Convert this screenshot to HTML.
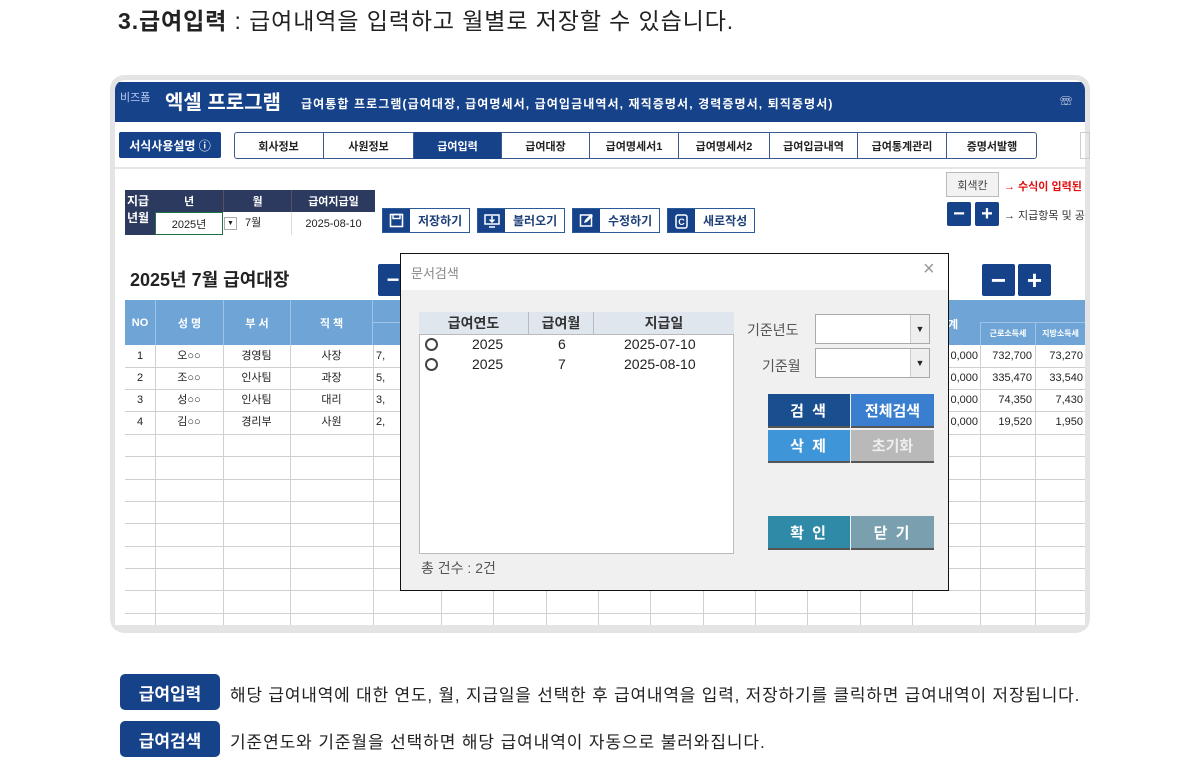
<!DOCTYPE html>
<html><head><meta charset="utf-8"><style>
*{margin:0;padding:0;box-sizing:border-box}
body{width:1200px;height:780px;background:#fff;font-family:"Liberation Sans","Noto Sans CJK KR",sans-serif;position:relative;overflow:hidden;color:#222}
.a{position:absolute}
.c{display:flex;align-items:center;justify-content:center}
.tab{position:absolute;top:132px;height:27px;font-size:11px;font-weight:bold;border-right:1px solid #3a5a8f;display:flex;align-items:center;justify-content:center;color:#222}
.btn{position:absolute;top:208px;height:25px;border:1px solid #2a5a9a;background:#fff;display:flex;align-items:center;font-size:12px;font-weight:bold;color:#1d3f78}
.btn .ic{width:27px;height:100%;background:#16428a;display:flex;align-items:center;justify-content:center;margin-right:8px}
.pm{position:absolute;background:#16428a;color:#fff;font-weight:bold;display:flex;align-items:center;justify-content:center;border-radius:2px}
.hl{position:absolute;height:1px;background:#d0d0d0}
.vl{position:absolute;width:1px;background:#d0d0d0}
.cell{position:absolute;font-size:11px;text-align:center;height:22px;line-height:22px}
.dbtn{position:absolute;color:#fff;font-weight:bold;font-size:15px;display:flex;align-items:center;justify-content:center;border-bottom:2px solid #555;letter-spacing:2px}
</style></head><body>

<div class="a" style="left:118px;top:2px;font-size:23px;white-space:nowrap;letter-spacing:0.9px"><b>3.급여입력</b> : 급여내역을 입력하고 월별로 저장할 수 있습니다.</div>

<!-- frame -->
<div class="a" style="left:110px;top:75px;width:980px;height:558px;background:#e4e4e4;border-radius:14px"></div>
<div class="a" style="left:115px;top:80px;width:970px;height:545px;background:#fff;border-radius:10px 10px 0 0;overflow:hidden">
  <div class="a" style="left:0;top:2px;width:970px;height:40px;background:#16428a"></div>
</div>
<div class="a" style="left:120px;top:89px;font-size:11px;color:#b9cdf0">비즈폼</div>
<div class="a" style="left:165px;top:86px;font-size:20px;font-weight:bold;color:#fff">엑셀 프로그램</div>
<div class="a" style="left:301px;top:95px;font-size:12px;font-weight:bold;color:#fff;white-space:nowrap;letter-spacing:1.1px">급여통합 프로그램(급여대장, 급여명세서, 급여입금내역서, 재직증명서, 경력증명서, 퇴직증명서)</div>
<div class="a" style="left:1060px;top:92px;font-size:12px;font-weight:bold;color:#fff">☏</div>

<!-- nav -->
<div class="a c" style="left:119px;top:132px;width:102px;height:26px;background:#16428a;color:#fff;font-size:12px;font-weight:bold;border-radius:2px">서식사용설명 ⓘ</div>
<div class="a" style="left:234px;top:132px;width:803px;height:27px;border:1px solid #3a5a8f;border-radius:3px"></div>
<div class="tab" style="left:234px;width:90px">회사정보</div>
<div class="tab" style="left:324px;width:90px">사원정보</div>
<div class="tab" style="left:414px;width:88px;background:#16428a;color:#fff">급여입력</div>
<div class="tab" style="left:502px;width:88px">급여대장</div>
<div class="tab" style="left:590px;width:89px">급여명세서1</div>
<div class="tab" style="left:679px;width:91px">급여명세서2</div>
<div class="tab" style="left:770px;width:88px">급여입금내역</div>
<div class="tab" style="left:858px;width:89px">급여통계관리</div>
<div class="tab" style="left:947px;width:90px;border-right:none">증명서발행</div>
<div class="a" style="left:1080px;top:132px;width:10px;height:27px;border:1px solid #ccc"></div>
<div class="a" style="left:115px;top:167px;width:970px;height:2px;background:#e6e6e6"></div>

<!-- small table -->
<div class="a" style="left:125px;top:190px;width:250px;height:45px;background:#2b3a5e"></div>
<div class="a" style="left:127px;top:193px;font-size:12px;font-weight:bold;color:#fff;line-height:17px">지급<br>년월</div>
<div class="a c" style="left:155px;top:190px;width:68px;height:22px;color:#fff;font-size:11px;font-weight:bold">년</div>
<div class="a c" style="left:223px;top:190px;width:68px;height:22px;color:#fff;font-size:11px;font-weight:bold;border-left:1px solid #555">월</div>
<div class="a c" style="left:291px;top:190px;width:84px;height:22px;color:#fff;font-size:11px;font-weight:bold;border-left:1px solid #555">급여지급일</div>
<div class="a c" style="left:155px;top:212px;width:68px;height:23px;background:#fff;border:1px solid #217346;font-size:11px">2025년</div>
<div class="a" style="left:223px;top:212px;width:68px;height:23px;background:#fff;font-size:11px;line-height:22px"><span style="display:inline-block;width:13px;height:13px;border:1px solid #aaa;font-size:7px;line-height:12px;text-align:center;vertical-align:middle;margin:0 8px 0 1px">▼</span>7월</div>
<div class="a c" style="left:291px;top:212px;width:84px;height:23px;background:#fff;border-left:1px solid #ddd;font-size:11px">2025-08-10</div>

<div class="btn" style="left:382px;width:88px"><span class="ic"><svg width="15" height="15" viewBox="0 0 15 15"><rect x="1.5" y="1.5" width="12" height="12" fill="none" stroke="#fff" stroke-width="1.6"/><rect x="4" y="1.5" width="7" height="4" fill="none" stroke="#fff" stroke-width="1.4"/></svg></span>저장하기</div>
<div class="btn" style="left:477px;width:88px"><span class="ic"><svg width="16" height="15" viewBox="0 0 16 15"><rect x="1" y="2" width="14" height="9" fill="none" stroke="#fff" stroke-width="1.5"/><path d="M8 3v6M5.5 6.5L8 9l2.5-2.5M5 14h6" stroke="#fff" stroke-width="1.5" fill="none"/></svg></span>불러오기</div>
<div class="btn" style="left:572px;width:88px"><span class="ic"><svg width="15" height="15" viewBox="0 0 15 15"><rect x="1.5" y="2" width="11" height="11" fill="none" stroke="#fff" stroke-width="1.5"/><path d="M5 10l1-3 6-6 2 2-6 6z" fill="#fff"/></svg></span>수정하기</div>
<div class="btn" style="left:667px;width:88px"><span class="ic"><svg width="15" height="17" viewBox="0 0 15 17"><rect x="2" y="3" width="11" height="13" rx="2" fill="none" stroke="#fff" stroke-width="1.5"/><text x="7.5" y="13" font-size="9" fill="#fff" text-anchor="middle" font-family="Liberation Sans">C</text></svg></span>새로작성</div>

<div class="a c" style="left:946px;top:172px;width:53px;height:25px;background:#f2f2f2;border:1px solid #bbb;font-size:11px;color:#444">회색칸</div>
<div class="a" style="left:1004px;top:178px;font-size:11px;font-weight:bold;color:#e01010;white-space:nowrap">→ 수식이 입력된</div>
<div class="pm" style="left:947px;top:202px;width:24px;height:24px;font-size:20px">−</div>
<div class="pm" style="left:975px;top:202px;width:24px;height:24px;font-size:20px">+</div>
<div class="a" style="left:1004px;top:207px;font-size:11px;white-space:nowrap;color:#333">→ 지급항목 및 공</div>

<div class="a" style="left:130px;top:266px;font-size:18px;font-weight:bold">2025년 7월 급여대장</div>
<div class="pm" style="left:378px;top:264px;width:30px;height:32px;font-size:22px">−</div>
<div class="pm" style="left:982px;top:264px;width:33px;height:32px;font-size:26px">−</div>
<div class="pm" style="left:1018px;top:264px;width:33px;height:32px;font-size:26px">+</div>

<!-- main table -->
<div class="a" style="left:125px;top:300px;width:960px;height:45px;background:#6fa5d6"></div>
<div class="a" style="left:373px;top:322px;width:539px;height:1px;background:#9fc3e6"></div>
<div class="a" style="left:980px;top:322px;width:105px;height:1px;background:#9fc3e6"></div>
<div class="a c" style="left:125px;top:300px;width:30px;height:45px;color:#fff;font-size:11px;font-weight:bold">NO</div>
<div class="a c" style="left:155px;top:300px;width:68px;height:45px;color:#fff;font-size:11px;font-weight:bold;border-left:1px solid #9fc3e6">성 명</div>
<div class="a c" style="left:223px;top:300px;width:67px;height:45px;color:#fff;font-size:11px;font-weight:bold;border-left:1px solid #9fc3e6">부 서</div>
<div class="a c" style="left:290px;top:300px;width:83px;height:45px;color:#fff;font-size:11px;font-weight:bold;border-left:1px solid #9fc3e6;border-right:1px solid #9fc3e6">직 책</div>
<div class="a" style="left:948px;top:316px;color:#fff;font-size:11px;font-weight:bold">계</div>
<div class="a c" style="left:980px;top:322px;width:55px;height:23px;color:#fff;font-size:8px;font-weight:bold;border-left:1px solid #9fc3e6">근로소득세</div>
<div class="a c" style="left:1035px;top:322px;width:50px;height:23px;color:#fff;font-size:8px;font-weight:bold;border-left:1px solid #9fc3e6">지방소득세</div>

<div class="hl" style="left:125px;top:367px;width:960px"></div>
<div class="hl" style="left:125px;top:389px;width:960px"></div>
<div class="hl" style="left:125px;top:411px;width:960px"></div>
<div class="hl" style="left:125px;top:434px;width:960px"></div>
<div class="hl" style="left:125px;top:456px;width:960px"></div>
<div class="hl" style="left:125px;top:479px;width:960px"></div>
<div class="hl" style="left:125px;top:501px;width:960px"></div>
<div class="hl" style="left:125px;top:523px;width:960px"></div>
<div class="hl" style="left:125px;top:546px;width:960px"></div>
<div class="hl" style="left:125px;top:568px;width:960px"></div>
<div class="hl" style="left:125px;top:590px;width:960px"></div>
<div class="hl" style="left:125px;top:613px;width:960px"></div>
<div class="vl" style="left:155px;top:345px;height:280px"></div>
<div class="vl" style="left:223px;top:345px;height:280px"></div>
<div class="vl" style="left:290px;top:345px;height:280px"></div>
<div class="vl" style="left:373px;top:345px;height:280px"></div>
<div class="vl" style="left:441px;top:345px;height:280px"></div>
<div class="vl" style="left:493px;top:345px;height:280px"></div>
<div class="vl" style="left:546px;top:345px;height:280px"></div>
<div class="vl" style="left:598px;top:345px;height:280px"></div>
<div class="vl" style="left:650px;top:345px;height:280px"></div>
<div class="vl" style="left:703px;top:345px;height:280px"></div>
<div class="vl" style="left:755px;top:345px;height:280px"></div>
<div class="vl" style="left:807px;top:345px;height:280px"></div>
<div class="vl" style="left:860px;top:345px;height:280px"></div>
<div class="vl" style="left:912px;top:345px;height:280px"></div>
<div class="vl" style="left:980px;top:345px;height:280px"></div>
<div class="vl" style="left:1035px;top:345px;height:280px"></div>

<div class="cell" style="left:125px;top:345px;width:30px">1</div><div class="cell" style="left:155px;top:345px;width:68px">오○○</div><div class="cell" style="left:223px;top:345px;width:67px">경영팀</div><div class="cell" style="left:290px;top:345px;width:83px">사장</div><div class="cell" style="left:376px;top:345px">7,</div>
<div class="cell" style="left:125px;top:367px;width:30px">2</div><div class="cell" style="left:155px;top:367px;width:68px">조○○</div><div class="cell" style="left:223px;top:367px;width:67px">인사팀</div><div class="cell" style="left:290px;top:367px;width:83px">과장</div><div class="cell" style="left:376px;top:367px">5,</div>
<div class="cell" style="left:125px;top:389px;width:30px">3</div><div class="cell" style="left:155px;top:389px;width:68px">성○○</div><div class="cell" style="left:223px;top:389px;width:67px">인사팀</div><div class="cell" style="left:290px;top:389px;width:83px">대리</div><div class="cell" style="left:376px;top:389px">3,</div>
<div class="cell" style="left:125px;top:411px;width:30px">4</div><div class="cell" style="left:155px;top:411px;width:68px">김○○</div><div class="cell" style="left:223px;top:411px;width:67px">경리부</div><div class="cell" style="left:290px;top:411px;width:83px">사원</div><div class="cell" style="left:376px;top:411px">2,</div>

<div class="cell" style="left:940px;top:345px;width:38px;text-align:right">0,000</div><div class="cell" style="left:980px;top:345px;width:52px;text-align:right">732,700</div><div class="cell" style="left:1035px;top:345px;width:48px;text-align:right">73,270</div>
<div class="cell" style="left:940px;top:367px;width:38px;text-align:right">0,000</div><div class="cell" style="left:980px;top:367px;width:52px;text-align:right">335,470</div><div class="cell" style="left:1035px;top:367px;width:48px;text-align:right">33,540</div>
<div class="cell" style="left:940px;top:389px;width:38px;text-align:right">0,000</div><div class="cell" style="left:980px;top:389px;width:52px;text-align:right">74,350</div><div class="cell" style="left:1035px;top:389px;width:48px;text-align:right">7,430</div>
<div class="cell" style="left:940px;top:411px;width:38px;text-align:right">0,000</div><div class="cell" style="left:980px;top:411px;width:52px;text-align:right">19,520</div><div class="cell" style="left:1035px;top:411px;width:48px;text-align:right">1,950</div>

<!-- dialog -->
<div class="a" style="left:400px;top:253px;width:549px;height:338px;background:#f0f0f0;border:1px solid #111">
  <div class="a" style="left:0;top:0;width:547px;height:36px;background:#fff"></div>
  <div class="a" style="left:10px;top:9px;font-size:13px;color:#888">문서검색</div>
  <div class="a" style="left:522px;top:4px;font-size:20px;color:#999;font-weight:300">×</div>
  <div class="a" style="left:18px;top:58px;width:315px;height:242px;background:#fff;border:1px solid #bbb"></div>
  <div class="a" style="left:18px;top:58px;width:315px;height:23px;background:#dfe6ee;border-bottom:1px solid #bbb"></div>
  <div class="a c" style="left:18px;top:58px;width:110px;height:22px;font-size:14px;font-weight:bold;color:#333;border-right:1px solid #bbb">급여연도</div>
  <div class="a c" style="left:128px;top:58px;width:65px;height:22px;font-size:14px;font-weight:bold;color:#333;border-right:1px solid #bbb">급여월</div>
  <div class="a c" style="left:193px;top:58px;width:140px;height:22px;font-size:14px;font-weight:bold;color:#333">지급일</div>
  <div class="a" style="left:24px;top:84px;width:13px;height:13px;border:2px solid #444;border-radius:50%"></div>
  <div class="a" style="left:24px;top:104px;width:13px;height:13px;border:2px solid #444;border-radius:50%"></div>
  <div class="a" style="left:71px;top:80px;font-size:14px;line-height:20px">2025<br>2025</div>
  <div class="a" style="left:157px;top:80px;font-size:14px;line-height:20px">6<br>7</div>
  <div class="a" style="left:223px;top:80px;font-size:14px;line-height:20px">2025-07-10<br>2025-08-10</div>
  <div class="a" style="left:346px;top:66px;font-size:14px;color:#555">기준년도</div>
  <div class="a" style="left:361px;top:102px;font-size:14px;color:#555">기준월</div>
  <div class="a" style="left:414px;top:60px;width:115px;height:30px;background:#fff;border:1px solid #aaa"></div>
  <div class="a c" style="left:509px;top:61px;width:19px;height:28px;background:#eee;border-left:1px solid #ccc;font-size:9px">▼</div>
  <div class="a" style="left:414px;top:94px;width:115px;height:30px;background:#fff;border:1px solid #aaa"></div>
  <div class="a c" style="left:509px;top:95px;width:19px;height:28px;background:#eee;border-left:1px solid #ccc;font-size:9px">▼</div>
  <div class="dbtn" style="left:367px;top:140px;width:82px;height:34px;background:#1a4f8f">검 색</div>
  <div class="dbtn" style="left:450px;top:140px;width:83px;height:34px;background:#3a7fcf;letter-spacing:0">전체검색</div>
  <div class="dbtn" style="left:367px;top:176px;width:82px;height:33px;background:#3e95d8">삭 제</div>
  <div class="dbtn" style="left:450px;top:176px;width:83px;height:33px;background:#b9b9b9;letter-spacing:0;color:#eee">초기화</div>
  <div class="dbtn" style="left:367px;top:262px;width:82px;height:34px;background:#2e8aa6">확 인</div>
  <div class="dbtn" style="left:450px;top:262px;width:83px;height:34px;background:#7aa0b0">닫 기</div>
  <div class="a" style="left:20px;top:304px;font-size:14px;color:#555">총 건수 : 2건</div>
</div>

<!-- bottom -->
<div class="a c" style="left:120px;top:674px;width:100px;height:36px;background:#16428a;border-radius:5px;color:#fff;font-size:17px;font-weight:bold">급여입력</div>
<div class="a" style="left:230px;top:681px;font-size:17px;white-space:nowrap;letter-spacing:0.8px">해당 급여내역에 대한 연도, 월, 지급일을 선택한 후 급여내역을 입력, 저장하기를 클릭하면 급여내역이 저장됩니다.</div>
<div class="a c" style="left:120px;top:721px;width:100px;height:36px;background:#16428a;border-radius:5px;color:#fff;font-size:17px;font-weight:bold">급여검색</div>
<div class="a" style="left:230px;top:728px;font-size:17px;white-space:nowrap;letter-spacing:0.9px">기준연도와 기준월을 선택하면 해당 급여내역이 자동으로 불러와집니다.</div>
</body></html>
